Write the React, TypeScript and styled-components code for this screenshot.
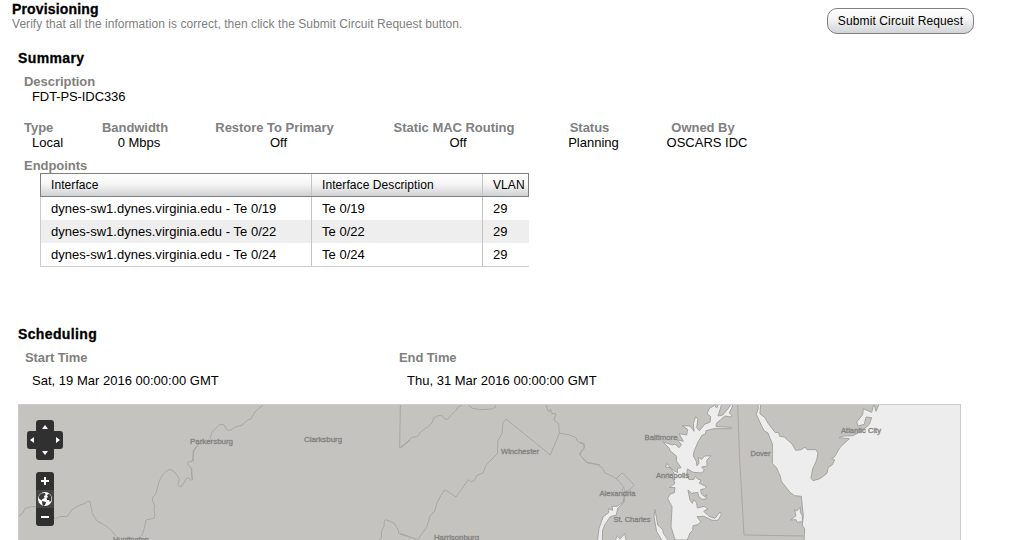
import React from 'react';
import styled, { createGlobalStyle } from 'styled-components';

const Global = createGlobalStyle`
  * { box-sizing: border-box; }
  body { margin: 0; background: #fff; overflow: hidden; }
`;

const Page = styled.div`
  width: 1012px;
  height: 540px;
  overflow: hidden;
  padding: 2px 0 0 12px;
  font: 13px/15px "Liberation Sans", Arial, sans-serif;
  color: #000;
  white-space: nowrap;
`;

const Header = styled.header`
  display: flex;
  justify-content: space-between;
  width: 962px;
  height: 49px;
`;

const Title = styled.h1`
  margin: 0;
  font-size: 14px;
  line-height: 15px;
  font-weight: 900;
  letter-spacing: 0.15px;
  -webkit-text-stroke: 0.3px #000;
`;

const Hint = styled.p`
  margin: 0;
  font-size: 12px;
  line-height: 14px;
  letter-spacing: 0.047px;
  color: #808080;
`;

const SubmitButton = styled.button`
  width: 147px;
  height: 26px;
  margin: 6px 0 0;
  padding: 0;
  border: 1px solid #808080;
  border-radius: 10px;
  background: linear-gradient(#fff, #f5f5f6 40%, #d3d4d6);
  font: 12px/15px "Liberation Sans", Arial, sans-serif;
  letter-spacing: 0.12px;
  color: #000;
`;

const Section = styled.section<{ $height: number }>`
  height: ${(p) => p.$height}px;
  padding-left: 6px;
`;

const SectionTitle = styled.h2`
  margin: 0 0 8px;
  font-size: 14px;
  line-height: 15px;
  font-weight: 900;
  letter-spacing: 0.37px;
  -webkit-text-stroke: 0.3px #000;
`;

const Label = styled.div`
  font-weight: bold;
  letter-spacing: -0.03px;
  color: #808080;
`;

const Value = styled.div`
  padding-left: 8px;
`;

const Fields = styled.div`
  padding-left: 6px;
  > ${Value} { letter-spacing: -0.1px; }
`;

const Stats = styled.div`
  display: flex;
  margin: 16px 0 8px;
`;

const Stat = styled.div<{ $width: number; $gap: number }>`
  width: ${(p) => p.$width}px;
  margin-right: ${(p) => p.$gap}px;
  text-align: center;
  &:first-child { text-align: left; }
`;

const Grid = styled.div`
  width: 489px;
  margin-left: 16px;
  border-bottom: 1px solid #ccc;
`;

const Row = styled.div<{ $odd?: boolean }>`
  display: grid;
  grid-template-columns: 271px 171px 46px;
  height: 23px;
  line-height: 23px;
  letter-spacing: 0.02px;
  border-left: 1px solid #ccc;
  background: ${(p) => (p.$odd ? '#eee' : '#fff')};
`;

const HeadRow = styled(Row)`
  grid-template-columns: 271px 171px 45px;
  height: 24px;
  font-size: 12px;
  letter-spacing: 0.08px;
  line-height: 22px;
  border: 1px solid #808080;
  background: linear-gradient(#fff, #f6f6f6 45%, #d0d1d3);
`;

const Cell = styled.div`
  padding-left: 10px;
  border-right: 1px solid #c4c4c4;
  &:last-child { border-right: 0; }
`;

const Times = styled.div`
  display: flex;
  padding-left: 7px;
`;

const Time = styled.div`
  width: 374px;
  ${Label} { margin-bottom: 8px; letter-spacing: -0.1px; }
  ${Value} { padding-left: 7px; letter-spacing: 0.01px; }
  & + & ${Value} { padding-left: 8px; }
`;

const MapFrame = styled.div`
  position: relative;
  width: 943px;
  height: 137px;
  margin-left: 6px;
  border: 1px solid #ccc;
  border-bottom: 0;
  background: #c4c3bf;
`;

const MapSvg = styled.svg`
  display: block;
  width: 941px;
  height: 136px;
`;

const Controls = styled.svg`
  position: absolute;
  left: 8px;
  top: 15px;
  width: 36px;
  height: 106px;
`;

const stats = [
  { label: 'Type', value: 'Local', width: 39, gap: 38 },
  { label: 'Bandwidth', value: '0 Mbps', width: 68, gap: 45 },
  { label: 'Restore To Primary', value: 'Off', width: 121, gap: 58 },
  { label: 'Static MAC Routing', value: 'Off', width: 122, gap: 45 },
  { label: 'Status', value: 'Planning', width: 59, gap: 39 },
  { label: 'Owned By', value: 'OSCARS IDC', width: 90, gap: 0 },
];

const ports = ['Te 0/19', 'Te 0/22', 'Te 0/24'];

const cities: [string, number, number, number][] = [
  ['Parkersburg', 190, 444, 43],
  ['Clarksburg', 304, 442, 38],
  ['Winchester', 501, 454, 38],
  ['Harrisonburg', 434, 539.5, 45],
  ['Huntington', 113, 542, 36],
  ['Baltimore', 644.5, 440, 33],
  ['Annapolis', 656, 478, 33],
  ['Alexandria', 599.5, 496, 36],
  ['St. Charles', 613.5, 521.5, 37],
  ['Dover', 750.5, 455.5, 20],
  ['Atlantic City', 841, 432.5, 40],
];

function CoastMap() {
  return (
    <MapSvg viewBox="19 405 941 136">
      <g fill="none" stroke="#a8a7a4" strokeWidth="3" strokeLinejoin="round">
        <g transform="translate(0 400) scale(.33333)">
          <path d="M57 348L67 341L75 326L95 319L116 323L132 338L155 351L168 355L180 350L202 349L210 338L215 330L235 317L250 312L262 305L270 304L274 325L277 340L290 362L310 373L325 383L338 396L347 408M425 408L433 385L438 360L452 357L462 355L465 345L462 331L464 318L457 300L459 291L467 283L473 260L477 245L487 226L498 214L508 208L522 214L532 227L538 238L534 252L538 260L546 258L556 241L560 234L566 234L572 241L577 238L575 205L562 192L563 187L578 183L580 156L597 130" />
        </g>
        <g transform="translate(190 400) scale(.33333)">
          <path d="M0 185L10 182L10 152L25 132M60 118L65 98L88 74L102 74L108 86L115 92L123 90L133 82L155 76L170 62L183 56L195 36L206 25L220 15M0 202L4 204L5 230L8 240M631 15L629 143L635 142L660 121M568 420L574 412L575 391L582 380L583 363L587 359L612 369L625 390L626 400L660 410" />
        </g>
        <g transform="translate(400 400) scale(.33333)">
          <path d="M0 143L37 112L52 110L62 96L85 79L96 69L101 54L116 46L127 48L135 57L143 58L155 43L167 32L175 20L187 15M205 15L218 25L244 29L275 27L286 22L286 15M0 402L53 419L80 382L91 346L105 333L110 310L123 286L135 269L168 291L205 239L212 245L223 242L230 227L250 218L257 197L290 163L292 162L294 121L306 100L309 68L318 57L451 165L478 100L476 71L462 60L468 42L454 40L452 27L448 36L443 30L439 15M478 100L506 104L528 113L533 125L552 134L552 144L538 162L560 188L600 194" />
        </g>
        <g transform="translate(690 400) scale(.33333)">
          <path d="M143 15L149 180L155 280L162 405L340 408" />
        </g>
      </g>
      <g fill="#ededed" stroke="#a4a3a0" strokeWidth="3" strokeLinejoin="round">
        <g transform="translate(690 400) scale(.33333)">
          <path d="M95 12L90 30L84 48L98 45L110 31L124 12L128 18L118 39L126 47L120 51L105 48L91 60L79 70L78 80L124 82L124 86L72 86L48 92L46 102L36 106L24 126L12 155L10 168L19 184L21 198L27 189L25 172L35 178L44 168L63 167L50 182L52 198L35 201L43 210L36 219L10 217L-8 207L-10 224L-3 239L12 238L16 229L23 237L33 240L28 250L50 260L44 266L32 269L34 282L45 290L50 283L47 297L36 298L26 289L23 277L5 280L-6 270L0 300L7 310L11 298L20 309L22 324L43 319L54 327L41 334L59 350L75 355L90 336L94 344L84 361L66 361L42 349L21 350L32 365L24 374L9 377L8 392L0 399L-8 420L-45 420L-57 380L-54 320L-67 296L-60 282L-47 278L-45 263L-62 262L-45 250L-51 237L-68 221L-55 224L-48 220L-60 203L-73 201L-70 190L-50 211L-37 218L-38 205L-27 203L-41 182L-40 169L-60 152L-62 145L-82 125L-52 135L-45 132L-33 143L-25 134L-39 119L-20 124L-33 101L-10 105L-7 88L-24 77L0 78L8 88L12 94L10 70L17 50L24 57L20 83L28 92L45 72L60 67L62 50L51 40L59 24L74 16L80 24L86 12Z" />
          <path d="M203 10L205 25L199 43L214 76L223 93L234 99L247 132L247 190L260 204L271 229L274 244L300 277L313 287L334 289L337 320L340 347L337 376L344 387L342 425L830 425L830 10L568 10L558 34L552 10L545 37L520 26L518 44L500 66L504 78L523 73L528 51L545 53L538 73L516 92L489 107L460 108L447 113L478 116L450 142L434 170L425 175L434 180L427 194L414 203L411 220L390 236L369 242L363 235L368 207L380 180L384 159L378 149L351 149L345 141L334 149L317 151L306 132L283 111L269 109L266 97L256 98L235 71L224 52L210 42L212 10Z" />
          <path d="M337 365L321 367L318 359L302 360L318 347L313 328L320 333L331 322L331 337L337 347Z" />
        </g>
        <g transform="translate(580 400) scale(.33333)">
          <path d="M52 425L57 385L70 350L86 338L86 326L98 331L96 319L111 319L130 306L132 290L127 266L131 260L134 293L132 307L113 325L109 345L91 350L76 371L68 390L67 425ZM225 328L230 356L233 375L247 388L252 403L268 425L248 425L230 395L222 350ZM104 425L112 407L120 417L134 401L140 425Z" />
        </g>
      </g>
      <g transform="translate(580 400) scale(.33333)" fill="none" stroke="#a8a7a4" strokeWidth="3">
        <path d="M0 127L12 130L14 143L3 156L0 165L21 187L52 194L68 205L75 219L100 230L118 244L129 258M108 237L127 218L163 255L138 279" />
      </g>
      <g fill="#858583" stroke="#858583" strokeWidth=".35" fontFamily='"Liberation Sans", Arial, sans-serif' fontSize="7.5">
        {cities.map(([name, x, y, w]) => (
          <text key={name} x={x} y={y} textLength={w} lengthAdjust="spacingAndGlyphs">{name}</text>
        ))}
      </g>
    </MapSvg>
  );
}

function MapControls() {
  return (
    <Controls viewBox="0 0 36 106">
      <path fill="#303030" d="M12 0H24Q27 0 27 3V11H33Q36 11 36 14V26Q36 29 33 29H27V37Q27 40 24 40H12Q9 40 9 37V29H3Q0 29 0 26V14Q0 11 3 11H9V3Q9 0 12 0Z" />
      <path fill="#fff" d="M18 5L21 9H15ZM18 35L21 31H15ZM3 20L7 17V23ZM33 20L29 17V23Z" />
      <rect x="9" y="52" width="18" height="54" rx="3" fill="#303030" />
      <rect x="9" y="70" width="18" height="18" fill="#444" />
      <path d="M14 61H22M18 57V65M14 97H22" stroke="#fff" strokeWidth="2" />
      <circle cx="18" cy="79" r="7" fill="#fff" />
      <path fill="#383838" d="M14 73.5L18 73L18.5 75L17 76L17.5 78L15.5 79L14.5 80.5L12 78.5L12 76ZM15 81L19 82L18.5 84L17 86L15.5 85ZM20 75L22 73.8L24 76L24.4 80L23 82L22 80L20 80L19.5 78L21 77Z" />
    </Controls>
  );
}

export default function App() {
  return (
    <Page>
      <Global />
      <Header>
        <div>
          <Title>Provisioning</Title>
          <Hint>Verify that all the information is correct, then click the Submit Circuit Request button.</Hint>
        </div>
        <SubmitButton>Submit Circuit Request</SubmitButton>
      </Header>
      <Section $height={276}>
        <SectionTitle>Summary</SectionTitle>
        <Fields>
          <Label>Description</Label>
          <Value>FDT-PS-IDC336</Value>
          <Stats>
            {stats.map((s) => (
              <Stat key={s.label} $width={s.width} $gap={s.gap}>
                <Label>{s.label}</Label>
                <Value>{s.value}</Value>
              </Stat>
            ))}
          </Stats>
          <Label>Endpoints</Label>
          <Grid>
            <HeadRow>
              <Cell>Interface</Cell>
              <Cell>Interface Description</Cell>
              <Cell>VLAN</Cell>
            </HeadRow>
            {ports.map((port, i) => (
              <Row key={port} $odd={i % 2 === 1}>
                <Cell>dynes-sw1.dynes.virginia.edu - {port}</Cell>
                <Cell>{port}</Cell>
                <Cell>29</Cell>
              </Row>
            ))}
          </Grid>
        </Fields>
      </Section>
      <Section $height={77}>
        <SectionTitle>Scheduling</SectionTitle>
        <Times>
          <Time>
            <Label>Start Time</Label>
            <Value>Sat, 19 Mar 2016 00:00:00 GMT</Value>
          </Time>
          <Time>
            <Label>End Time</Label>
            <Value>Thu, 31 Mar 2016 00:00:00 GMT</Value>
          </Time>
        </Times>
      </Section>
      <MapFrame>
        <CoastMap />
        <MapControls />
      </MapFrame>
    </Page>
  );
}
